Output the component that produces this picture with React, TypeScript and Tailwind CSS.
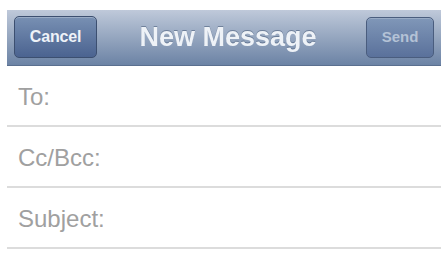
import React from 'react';

const fields = ['To:', 'Cc/Bcc:', 'Subject:'];

export default function App() {
  return (
    <div className="w-[448px] h-[254px] bg-white px-[7px] pt-[10px] overflow-hidden font-['Liberation_Sans',Arial,sans-serif]">
      {/* nav bar */}
      <div className="h-[56px] grid grid-cols-[1fr_auto_1fr] items-center px-[7px] bg-gradient-to-b from-[#bfc9da] via-[#95a6bf] to-[#6c83a5] border-b border-[#5a6f8f]">
        <div className="flex">
          <button className="w-[83px] h-[42px] -mt-[2px] rounded-[5px] border border-[#3c4f70] bg-gradient-to-b from-[#7890b3] to-[#4b6390] shadow-[inset_0_1px_0_rgba(255,255,255,0.25)] text-[16px] font-bold text-[#eef2f8] tracking-[-0.2px]">
            Cancel
          </button>
        </div>
        <div className="text-[27px] font-bold text-[#eef2f7] pl-[24px] pr-[16px] leading-none drop-shadow-[0_-1px_0_rgba(60,80,110,0.5)]">
          New Message
        </div>
        <div className="flex justify-end">
          <button className="w-[68px] h-[41px] rounded-[5px] border border-[#4a5d7e] bg-gradient-to-b from-[#8097b8] to-[#5a719b] shadow-[inset_0_1px_0_rgba(255,255,255,0.2)] text-[15px] font-bold text-[#b4c2d6]">
            Send
          </button>
        </div>
      </div>

      {/* fields */}
      <div className="flex flex-col">
        {fields.map((f) => (
          <div key={f} className="h-[61px] flex items-center pl-[11px] pt-[2px] border-b-2 border-[#dcdcdc]">
            <span className="text-[24px] text-[#a0a0a0]">{f}</span>
          </div>
        ))}
      </div>
    </div>
  );
}
